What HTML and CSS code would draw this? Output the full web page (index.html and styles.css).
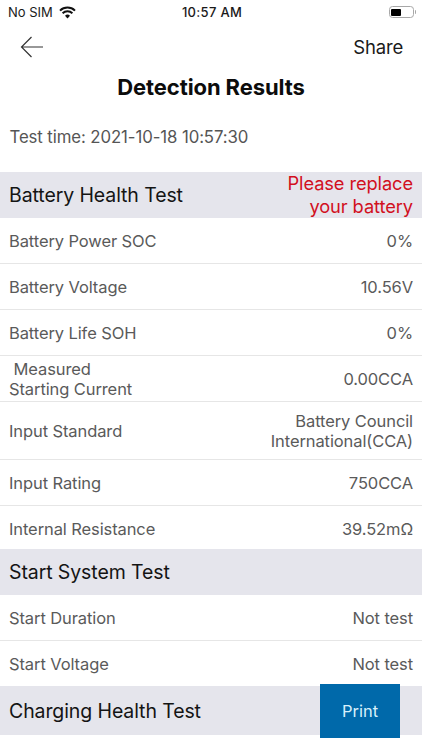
FILE: index.html
```html
<!DOCTYPE html>
<html lang="en">
<head>
<meta charset="utf-8">
<title>Detection Results</title>
<link rel="stylesheet" href="styles.css">
</head>
<body>
<div class="screen">
  <div class="status">
    <div class="status-left">
      <span>No SIM</span>
      <svg class="wifi" width="17" height="13" viewBox="0 0 17 13"><path d="M1 4.6a10.8 10.8 0 0 1 15 0" fill="none" stroke="#111" stroke-width="2"/><path d="M3.6 7.2a7.1 7.1 0 0 1 9.8 0" fill="none" stroke="#111" stroke-width="2"/><path d="M6 9.7a3.5 3.5 0 0 1 5 0L8.5 12.4z" fill="#111"/></svg>
    </div>
    <div class="status-time">10:57 AM</div>
    <div class="status-right">
      <span class="battery"><span class="battery-fill"></span></span><span class="battery-cap"></span>
    </div>
  </div>
  <div class="nav">
    <svg class="back" width="23" height="22" viewBox="0 0 23 22"><path d="M11.5 1 1.5 11l10 10M1.5 11H23" fill="none" stroke="#333" stroke-width="1.2"/></svg>
    <span class="share">Share</span>
  </div>
  <h1 class="title">Detection Results</h1>
  <p class="test-time">Test time: 2021-10-18 10:57:30</p>

  <div class="section">
    <span class="section-name">Battery Health Test</span>
    <span class="alert">Please replace<br>your battery</span>
  </div>
  <div class="row"><span>Battery Power SOC</span><span>0%</span></div>
  <div class="row"><span>Battery Voltage</span><span>10.56V</span></div>
  <div class="row"><span>Battery Life SOH</span><span>0%</span></div>
  <div class="row"><span class="multi">&nbsp;Measured<br>Starting Current</span><span>0.00CCA</span></div>
  <div class="row row-tall"><span>Input Standard</span><span class="right">Battery Council<br>International(CCA)</span></div>
  <div class="row"><span>Input Rating</span><span>750CCA</span></div>
  <div class="row row-short"><span>Internal Resistance</span><span>39.52mΩ</span></div>

  <div class="section">
    <span class="section-name">Start System Test</span>
  </div>
  <div class="row"><span>Start Duration</span><span>Not test</span></div>
  <div class="row row-last"><span>Start Voltage</span><span>Not test</span></div>

  <div class="section section-end">
    <span class="section-name">Charging Health Test</span>
    <button class="print">Print</button>
  </div>
</div>
</body>
</html>
```
FILE: styles.css
```css
* { box-sizing: border-box; }
html, body { margin: 0; padding: 0; }
body { background: #fff; font-family: Inter, "Liberation Sans", sans-serif; }
.screen { width: 422px; height: 750px; overflow: hidden; display: flex; flex-direction: column; background: #fff; }
.status { height: 24px; flex: none; display: grid; grid-template-columns: 1fr auto 1fr; align-items: center; padding: 0 6px 0 8px; font-size: 13px; color: #1a1a1a; }
.status-left { display: flex; align-items: center; gap: 6px; }
.status-time { font-weight: 500; letter-spacing: 0.3px; }
.status-right { display: flex; align-items: center; justify-content: flex-end; }
.battery { width: 25px; height: 12px; border: 1px solid #a8a8a8; border-radius: 3.5px; padding: 1.5px; display: flex; }
.battery-fill { width: 10px; background: #000; border-radius: 1px; }
.battery-cap { width: 1.5px; height: 4px; background: #a8a8a8; margin-left: 1px; border-radius: 0 1px 1px 0; }
.nav { height: 46px; flex: none; display: flex; align-items: center; justify-content: space-between; padding: 0 19px 0 20px; }
.back { display: block; }
.share { font-size: 18.5px; letter-spacing: -0.2px; color: #1a1a1a; }
.title { margin: 0; height: 36px; flex: none; text-align: center; font-size: 22px; line-height: 35px; font-weight: 700; color: #0c0c0c; letter-spacing: -0.1px; }
.test-time { margin: 0; height: 66px; flex: none; padding: 21px 10px 0 9.5px; font-size: 16.8px; line-height: 20px; color: #555; letter-spacing: -0.1px; }
.section { height: 46px; flex: none; display: flex; align-items: center; justify-content: space-between; padding: 0 9px; background: #e5e5ec; }
.section-name { font-size: 19.5px; color: #141414; letter-spacing: -0.1px; }
.alert { font-size: 18.3px; line-height: 23px; color: #d2101e; text-align: right; letter-spacing: -0.1px; }
.row { height: 46px; flex: none; display: flex; align-items: center; justify-content: space-between; padding: 0 9px; border-bottom: 1px solid #e6e6e6; font-size: 16.5px; color: #5a5a5a; letter-spacing: -0.1px; }
.row-tall { height: 58px; }
.row-short { height: 43px; border-bottom: none; padding-top: 3px; }
.row-last { height: 45px; border-bottom: none; }
.multi { line-height: 20px; padding-top: 1px; }
.right { text-align: right; line-height: 20px; }
.section-end { height: 49px; position: relative; }
.print { position: absolute; left: 320px; top: -2px; width: 80px; height: 54px; border: none; background: #0069aa; color: #d8f0fb; font: inherit; font-size: 16.5px; padding: 0; }
```
